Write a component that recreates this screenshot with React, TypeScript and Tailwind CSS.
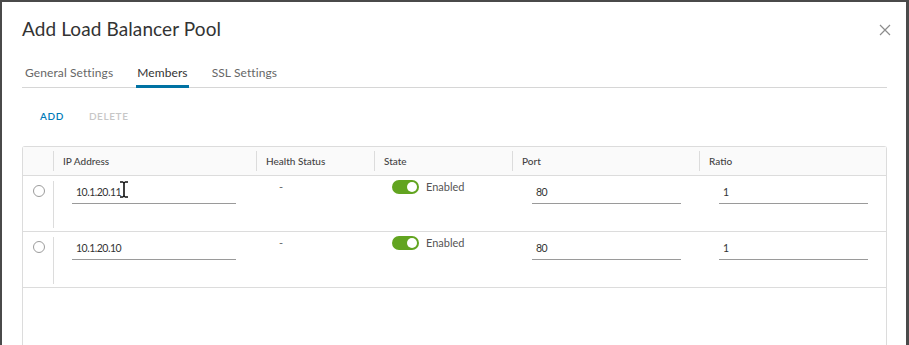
import type { FC } from 'react';

interface Member {
  ip: string;
  health: string;
  enabled: boolean;
  port: string;
  ratio: string;
}

const members: Member[] = [
  { ip: '10.1.20.11', health: '-', enabled: true, port: '80', ratio: '1' },
  { ip: '10.1.20.10', health: '-', enabled: true, port: '80', ratio: '1' },
];

const cols = 'grid grid-cols-[30px_203px_118px_138px_187px_1fr]';

const HeaderCell: FC<{ label: string }> = ({ label }) => (
  <div className="flex items-center h-full">
    <span className="w-px h-[20px] bg-[#dcdcdc]" />
    <span className="pl-[9px] text-[10px] font-medium text-[#444]">{label}</span>
  </div>
);

const UnderlineInput: FC<{ value: string; width: string; offset: string; cursor?: boolean }> = ({ value, width, offset, cursor }) => (
  <div className={`mt-[7px] ${offset} ${width} h-[21px] border-b border-[#9a9a9a] pl-[4px] flex items-center text-[10.5px] tracking-[-0.5px] text-[#333]`}>
    <span className="relative">
      {value}
      {cursor && (
        <svg className="absolute left-full top-[-4px] ml-[-2px]" width="10" height="17" viewBox="0 0 10 17">
          <path d="M1 1h3M6 1h3M5 2v13M1 16h3M6 16h3M4 1.5h2M4 15.5h2" stroke="#111" strokeWidth="1.6" fill="none" />
        </svg>
      )}
    </span>
  </div>
);

const Toggle: FC = () => (
  <div className="w-[27px] h-[14px] rounded-full bg-[#62a420] relative">
    <span className="absolute right-[2px] top-[2px] w-[10px] h-[10px] rounded-full bg-white" />
  </div>
);

export default function App() {
  return (
    <div className="w-[909px] h-[345px] overflow-hidden bg-[#4a4a4a] pt-[2px] px-[2px] font-['Lato','Open_Sans',sans-serif]">
      <div className="w-[904px] h-[343px] bg-white pl-[20px] pr-[20px] flex flex-col">
        <div className="flex items-center justify-between pt-[14px] h-[41px]">
          <h1 className="text-[19px] text-[#333] tracking-[0.1px]">Add Load Balancer Pool</h1>
          <svg width="12" height="12" viewBox="0 0 12 12" className="mr-[-5px] mt-[0px]">
            <path d="M1 1l10 10M11 1L1 11" stroke="#8c8c8c" strokeWidth="1.2" />
          </svg>
        </div>

        <div className="mt-[21px] flex gap-[23px] border-b border-[#d6d6d6] w-[865px] pl-[3px] text-[12px] tracking-[0.1px]">
          <div className="pb-[5px] text-[#666]">General Settings</div>
          <div className="pb-[2px] px-[1px] border-b-[3px] border-[#0072a3] text-[#333] mb-[-1px]">Members</div>
          <div className="pb-[5px] text-[#666]">SSL Settings</div>
        </div>

        <div className="mt-[21px] flex gap-[25px] pl-[18px] text-[10px] font-semibold tracking-[0.6px]">
          <span className="text-[#0079b8]">ADD</span>
          <span className="text-[#c7c7c7]">DELETE</span>
        </div>

        <div className="mt-[22px] w-[865px] flex-1 border border-[#dcdcdc] border-b-0 rounded-t-[3px]">
          <div className={`${cols} h-[29px] bg-[#fafafa] border-b border-[#dcdcdc]`}>
            <div />
            <HeaderCell label="IP Address" />
            <HeaderCell label="Health Status" />
            <HeaderCell label="State" />
            <HeaderCell label="Port" />
            <HeaderCell label="Ratio" />
          </div>
          {members.map((m, i) => (
            <div key={m.ip} className={`${cols} h-[56px] border-b border-[#dcdcdc]`}>
              <div className="flex">
                <span className="mt-[9px] ml-[10px] w-[12px] h-[12px] rounded-full border border-[#9c9c9c]" />
              </div>
              <div className="flex">
                <span className="mt-[5px] w-px h-[47px] bg-[#dcdcdc]" />
                <UnderlineInput value={m.ip} width="w-[164px]" offset="ml-[18px]" cursor={i === 0} />
              </div>
              <div className="pl-[23px] pt-[3px] text-[11px] text-[#666]">{m.health}</div>
              <div className="pl-[18px] pt-[4px] flex items-start gap-[7px]">
                <Toggle />
                <span className="text-[11px] text-[#555] leading-[13px]">{m.enabled ? 'Enabled' : 'Disabled'}</span>
              </div>
              <div>
                <UnderlineInput value={m.port} width="w-[149px]" offset="ml-[20px]" />
              </div>
              <div>
                <UnderlineInput value={m.ratio} width="w-[149px]" offset="ml-[20px]" />
              </div>
            </div>
          ))}
        </div>
      </div>
    </div>
  );
}
